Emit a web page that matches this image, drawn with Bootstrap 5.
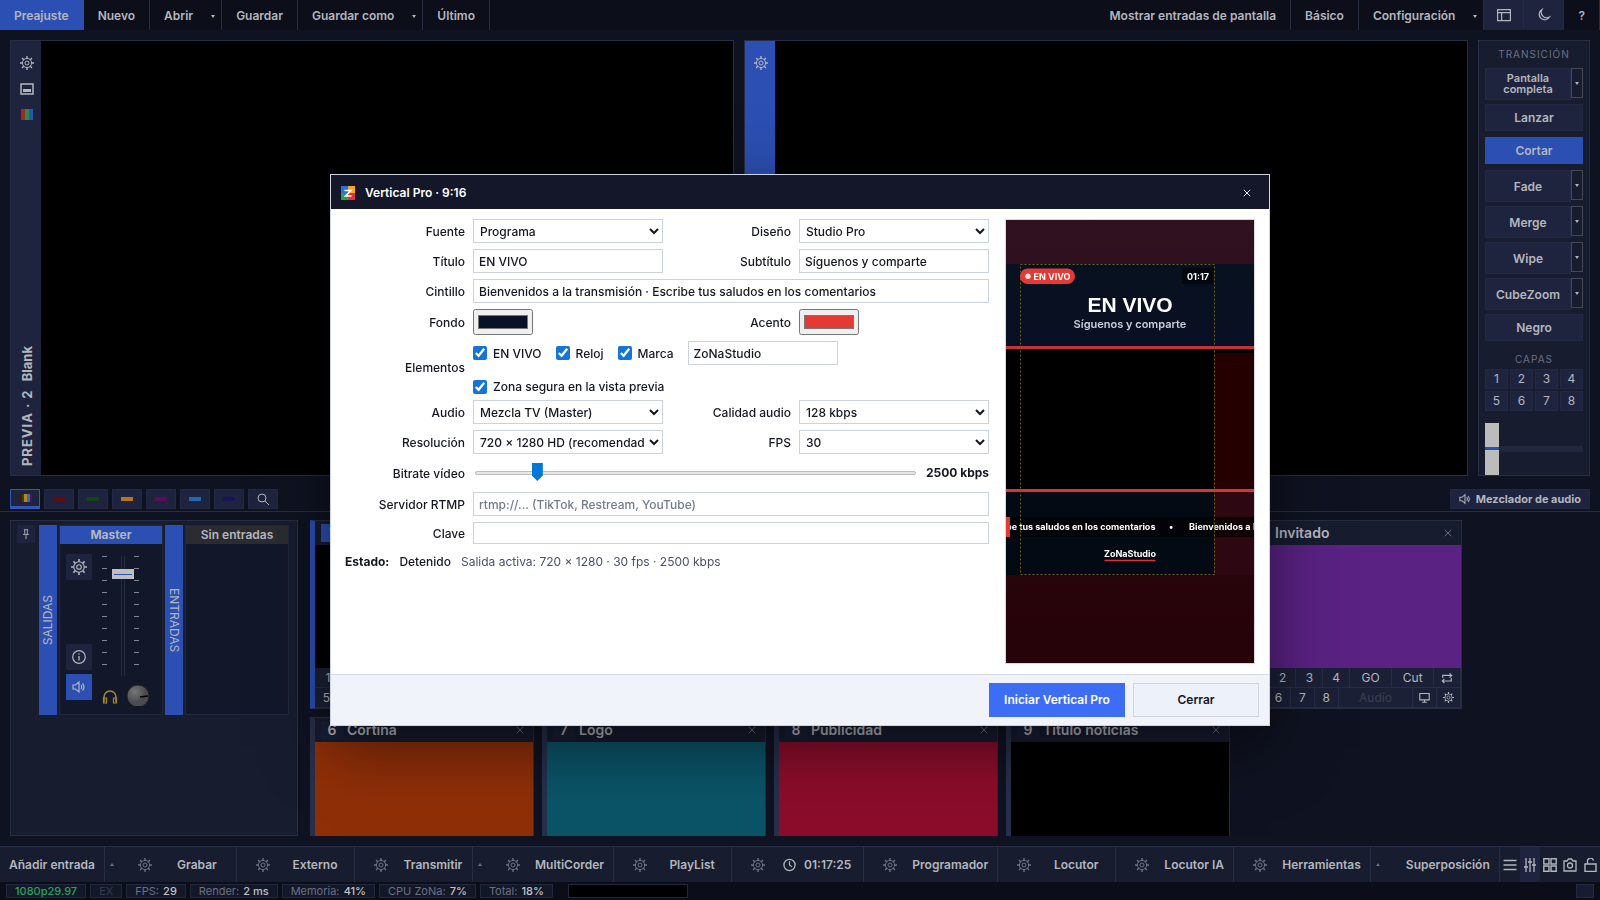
<!DOCTYPE html>
<html lang="es">
<head>
<meta charset="utf-8">
<meta name="viewport" content="width=device-width, initial-scale=1">
<title>ZoNaStudio</title>
<link href="https://cdn.jsdelivr.net/npm/bootstrap@5.3.0/dist/css/bootstrap.min.css" rel="stylesheet">
<style>
:root{--bar:#0c0e1a;--page:#0f1321;--panel:#171c2f;--key:#1e243d;--line:#272d42;--blue:#2b4fb2;--ink:#b4b6bd;--soft:#6b7083}
body{font-family:Inter,"Liberation Sans",sans-serif;font-size:12px;line-height:16px;background:var(--page);color:var(--ink);height:100vh;min-width:1280px;overflow:hidden}
button{font:inherit;color:inherit;background:none;border:0;padding:0}
svg{display:block;flex:none}
.ico{width:14px;height:14px;fill:none;stroke:currentColor}
.topbar{height:30px;background:var(--bar);font-weight:600}
.topbar button{padding:2px 14px 0;border-right:1px solid var(--line);height:30px;white-space:nowrap}
.topbar .active{background:var(--blue);border-color:var(--blue)}
.topbar .split{padding-right:6px;display:flex;align-items:center;gap:18px}
.topbar .sq{background:var(--key);width:40px;padding:0;display:grid;place-items:center;border-color:#242a42}
.caret,.caret-up{width:0;height:0;border:2px solid transparent;border-top:3px solid currentColor;border-bottom:0}
.caret-up{border-top:0;border-bottom:3px solid var(--soft)}
.stage{padding:10px 10px 0;gap:10px}
.monitor{flex:1;border:1px solid var(--line);background:#000}
.rail{width:30px;background:var(--key);padding:15px 0 9px 2px}
.rail.live{background:var(--blue)}
.vert{writing-mode:vertical-rl;transform:rotate(180deg)}
.rail .vert{font-size:13px;font-weight:700;letter-spacing:1px}
.rail .vert span{letter-spacing:0}
.trans{width:112px;height:436px;border:1px solid var(--line);background:var(--panel);padding:6px 6px 0;overflow:hidden}
.cap{font-size:10px;letter-spacing:1px;color:var(--soft);text-align:center;line-height:14px}
.key{background:var(--key);border:1px solid #232942;font-weight:600;font-size:12px;text-align:center;display:block;width:100%;height:27px;margin-bottom:6px}
.key.on{background:var(--blue);border-color:var(--blue)}
.duo{display:flex;margin-bottom:4px;height:32px}
.duo .key{height:32px;margin:0;line-height:11px}
.duo .drop{width:12px;flex:none;height:30px;border:1px solid #444855;display:grid;place-items:center}
.layers{display:grid;grid-template-columns:repeat(4,1fr);gap:2px}
.layers button{background:var(--key);height:20px;border:1px solid #232942}
.fader{height:52px;margin-top:12px}
input[type=range]{appearance:none;-webkit-appearance:none;background:none;margin:0}
.tbar{width:98px;height:52px;display:block}
.tbar::-webkit-slider-runnable-track{height:52px;background:linear-gradient(#22273e,#22273e) center/100% 6px no-repeat}
.tbar::-webkit-slider-thumb{-webkit-appearance:none;width:14px;height:52px;background:linear-gradient(#bcbcbc 24px,var(--blue) 24px 27px,#bcbcbc 27px)}
.tabs{height:36px;padding:13px 10px 2px;border-bottom:1px solid var(--line);gap:4px}
.tabs button{width:30px;height:20px;background:var(--key);border:1px solid #232942;display:grid;place-items:center}
.tabs i{width:12px;height:4px}
.tabs .active{border:1px solid #3157b8;border-bottom-width:3px}
.tabs .mix{width:auto;display:flex;align-items:center;gap:5px;padding:0 8px;font-size:11px;font-weight:700}
.work{padding:8px 0 10px 10px;gap:12px;min-height:0}
.mixer{width:288px;flex:none;border:1px solid var(--line);background:var(--panel);padding:4px 8px 0 6px}
.strips{height:190px}
.pin,.sqb{background:var(--key);display:grid;place-items:center}
.pin{width:18px;height:18px;margin-right:4px}
.sqb{width:26px;height:26px}
.bus{width:18px;background:var(--blue);display:grid;place-items:center}
.chan{flex:1;margin-left:2px;border:1px solid #22283c;background:#13172a}
.chan h2{font-size:12px;font-weight:700;line-height:18px;background:var(--blue);margin:0;text-align:center}
.chan .none{background:#2a2c31;font-weight:600}
.grid5{display:grid;grid-template-columns:repeat(auto-fill,224px);gap:8px;align-content:start;overflow:hidden;flex:1}
.feed{height:189px;border:1px solid var(--line);border-left:5px solid #282f4a;background:var(--panel)}
.feed.on{border-left-color:var(--blue)}
.feed header{height:24px;font-size:14px;font-weight:600;gap:4px;padding:0 6px}
.feed header b{width:22px;height:18px;line-height:18px;background:#1a1f36;text-align:center;font-weight:600}
.feed.on header b{background:var(--blue)}
.feed header button{margin-left:auto;color:#73767e}
.pic{height:123px}
.ctl{display:flex;height:20px}
.ctl button{flex:1;background:#1b2037;border:0 solid var(--line);border-width:0 1px 1px 0;display:grid;place-items:center}
.ctl .w{flex:1.6}.ctl .a{flex:3.2;color:#3b4054}
.dock{height:36px;border-top:1px solid var(--line);background:var(--panel);font-weight:600;white-space:nowrap}
.dock>*{flex:none;border-right:1px solid var(--line);display:flex;align-items:center}
.dock .gear{width:39px;height:100%;display:flex;align-items:center;justify-content:center;padding-left:13px;color:#6f7382}
.dock .go{min-width:78px;padding:0 9px;display:flex;align-items:center;justify-content:center;gap:8px}
.dock .up{width:14px;border-right:0;justify-content:center}
.dock .tools{flex:1;border:0}
.dock .tools button{flex:1;height:35px;display:grid;place-items:center}
.dock .tools .on{background:#1e243d}
.stat{height:18px;background:#0b0d19;padding:2px 6px;gap:4px;font-size:11px;color:var(--soft)}
.stat span{border:1px solid #22283d;background:#131829;height:14px;line-height:13px;padding:0 8px;white-space:nowrap}
.stat b{font-weight:500;color:#c0c2c8;margin-left:1px}
.modal-dialog{max-width:940px}
.modal-content{border:1px solid #cfd4e2;border-radius:0;box-shadow:0 20px 60px rgba(0,0,0,.5);color:#14171f}
.modal-header{background:#131729;color:#fff;height:34px;padding:1px 15px 0 10px;border:0;border-radius:0;gap:10px;justify-content:flex-start}
.modal-title{font-size:12px;font-weight:600;line-height:16px}
.modal-body{padding:10px 14px;gap:16px}
.modal-footer{background:#f0f3f9;border-top:1px solid #d5dce3;border-radius:0;padding:8px 10px;gap:8px;height:51px}
.modal-footer .btn{margin:0;height:34px;font-size:12px;font-weight:600;border-radius:0;padding:0}
.btn-go{width:136px;background:#3c6df4;color:#fff}.btn-shut{width:126px;border:1px solid #cfd5e0;background:#edf1fa;color:#14171f}
.form{flex:1;display:grid;grid-template-columns:120px 1fr 120px 1fr;gap:6px 8px;align-content:start;align-items:center;font-weight:500}
.form>label,.form>.lab{text-align:right;padding-top:1px}
.all{grid-column:2/-1}
.field{height:24px;width:100%;min-width:0;border:1px solid #ccd2dc;border-radius:0;background:#fff;color:#14171f;padding:0 5px;font-size:12px;font-weight:500;line-height:16px;outline:0}
select.field{padding:0 2px;font-weight:500}
.field::placeholder{color:#737b8c}
input[type=color]{width:60px;height:26px;display:block;padding:1px 2px}
input[type=color]::-webkit-color-swatch-wrapper{padding:4px 2px}
.checks{display:flex;flex-wrap:wrap;gap:14px;align-items:center}
.checks label{display:flex;align-items:center;gap:6px;line-height:15px}
.checks input[type=checkbox]{width:14px;height:14px;margin:0;accent-color:#1673d8}
.checks .field{width:150px}
.form .rate{flex:1;height:26px;margin:0 2px}
.rate::-webkit-slider-runnable-track{height:4px;border:1px solid #bdbdbd;background:#e6e6e6;border-radius:2px}
.rate::-webkit-slider-thumb{-webkit-appearance:none;width:11px;height:18px;margin-top:-9px;background:#0078d7;clip-path:polygon(0 0,100% 0,100% 70%,50% 100%,0 70%)}
.state{grid-column:1/-1;margin-top:4px}
.note{color:#475069;font-weight:400}
.shot{width:250px;flex:none;border:1px solid #d5d8e0}
.shot svg{width:100%;height:auto}
</style>
</head>
<body class="d-flex flex-column">
<svg width="0" height="0" class="position-absolute">
<symbol id="gear" viewBox="0 0 14 14"><circle cx="7" cy="7" r="4.6"/><circle cx="7" cy="7" r="2"/><path d="M7 0v2.4M7 11.6V14M0 7h2.4M11.6 7H14M2.1 2.1l1.6 1.6M10.3 10.3l1.6 1.6M2.1 11.9l1.6-1.6M10.3 3.7l1.6-1.6" stroke-width="1.4"/></symbol>
<symbol id="x" viewBox="0 0 14 14"><path d="M3.800 3.800l6.400 6.400M10.200 3.800l-6.400 6.400" stroke-width=".9"/></symbol>
<symbol id="spk" viewBox="0 0 14 14"><path d="M1 5h2.500L7 2v10L3.500 9H1zM9 5q1.500 2 0 4M10.500 3.500q3 3.500 0 7" stroke-width="1.200"/></symbol>
</svg>

<nav class="topbar d-flex" aria-label="Principal">
<button class="active">Preajuste</button><button>Nuevo</button><button class="split">Abrir<span class="caret"></span></button><button>Guardar</button><button class="split">Guardar como<span class="caret"></span></button><button>Último</button>
<button class="ms-auto">Mostrar entradas de pantalla</button><button>Básico</button><button class="split">Configuración<span class="caret"></span></button>
<button class="sq" aria-label="Diseño"><svg class="ico" viewBox="0 0 14 14"><path d="M.6 1.600h12.800v11H.6zM.6 4.600h12.800M4.600 4.600v8" stroke-width="1.200"/></svg></button>
<button class="sq" aria-label="Tema"><svg class="ico" viewBox="0 0 14 14"><path d="M5 1.500A5.500 5.500 0 1 0 12.500 9 5.500 5.500 0 0 1 5 1.500z" stroke-width="1.200"/></svg></button>
<button>?</button>
</nav>

<section class="stage d-flex">
<div class="monitor d-flex"><div class="rail d-flex flex-column align-items-center">
<svg class="ico"><use href="#gear"/></svg>
<svg class="ico" style="margin-top:12px" viewBox="0 0 14 14"><path d="M1 2h12v10H1z" stroke-width="1.500"/><path d="M3 8.500h8" stroke-width="3"/></svg>
<svg width="12" height="11" style="margin-top:13px"><path fill="#992b2b" d="M0 0h4v11H0z"/><path fill="#2c8a44" d="M4 0h4v11H4z"/><path fill="#2857a8" d="M8 0h4v11H8z"/></svg>
<div class="vert mt-auto">PREVIA · 2 &nbsp;<span>Blank</span></div></div></div>
<div class="monitor d-flex"><div class="rail live d-flex flex-column align-items-center"><svg class="ico"><use href="#gear"/></svg></div></div>
<aside class="trans">
<div class="cap" style="margin-bottom:7px">TRANSICIÓN</div>
<div class="duo"><button class="key" style="font-size:11px">Pantalla completa</button><button class="drop" aria-label="Opciones"><span class="caret"></span></button></div>
<button class="key">Lanzar</button><button class="key on">Cortar</button>
<div class="duo"><button class="key">Fade</button><button class="drop" aria-label="Opciones"><span class="caret"></span></button></div>
<div class="duo"><button class="key">Merge</button><button class="drop" aria-label="Opciones"><span class="caret"></span></button></div>
<div class="duo"><button class="key">Wipe</button><button class="drop" aria-label="Opciones"><span class="caret"></span></button></div>
<div class="duo"><button class="key">CubeZoom</button><button class="drop" aria-label="Opciones"><span class="caret"></span></button></div>
<button class="key">Negro</button>
<div class="cap" style="margin:11px 0 3px">CAPAS</div>
<div class="layers"><button>1</button><button>2</button><button>3</button><button>4</button><button>5</button><button>6</button><button>7</button><button>8</button></div>
<div class="fader"><input class="tbar" type="range" value="0" aria-label="Transición manual"></div>
</aside>
</section>

<section class="tabs d-flex">
<button class="active" aria-label="Todas"><svg width="13" height="8"><path fill="#4a1414" d="M0 0h3v8H0z"/><path fill="#145214" d="M3 0h2v8H3z"/><path fill="#c08020" d="M5 0h3v8H5z"/><path fill="#2e70b8" d="M8 0h3v8H8z"/><path fill="#551155" d="M11 0h2v8h-2z"/></svg></button>
<button aria-label="Rojo"><i style="background:#620b10"></i></button><button aria-label="Verde"><i style="background:#10451a"></i></button><button aria-label="Naranja"><i style="background:#b8741c"></i></button><button aria-label="Magenta"><i style="background:#5c0c5e"></i></button><button aria-label="Azul"><i style="background:#2268b4"></i></button><button aria-label="Índigo"><i style="background:#17155a"></i></button>
<button aria-label="Buscar"><svg class="ico" viewBox="0 0 14 14"><circle cx="6" cy="6" r="4"/><path d="M9 9l4 4"/></svg></button>
<button class="mix ms-auto"><svg class="ico" style="width:12px"><use href="#spk"/></svg>Mezclador de audio</button>
</section>

<section class="work d-flex flex-grow-1">
<div class="mixer"><div class="strips d-flex">
<button class="pin" aria-label="Fijar"><svg class="ico" style="width:12px;height:12px" viewBox="0 0 14 14"><path d="M4.500 2h5M5.500 2v5M8.500 2v5M3.500 7.500h7M7 7.500V13"/></svg></button>
<div class="bus"><span class="vert">SALIDAS</span></div>
<div class="chan d-flex flex-column"><h2>Master</h2>
<div class="d-flex flex-grow-1"><div class="d-flex flex-column ps-2" style="width:34px;padding-top:10px;margin-left:-2px">
<button class="sqb" aria-label="Ajustes"><svg class="ico" style="width:16px;height:16px"><use href="#gear"/></svg></button>
<button class="sqb" style="margin-top:64px" aria-label="Información"><svg class="ico" viewBox="0 0 14 14"><circle cx="7" cy="7" r="6.300" stroke-width="1.200"/><path d="M7 6v4.500M7 3.500v1.300" stroke-width="1.300"/></svg></button>
<button class="sqb" style="background:var(--blue);margin-top:4px" aria-label="Sonido"><svg class="ico"><use href="#spk"/></svg></button></div>
<svg width="68" height="162" viewBox="0 0 68 162"><path d="M10 12.500h5M10 24.500h5M10 36.500h5M10 48.500h5M10 60.500h5M10 72.500h5M10 84.500h5M10 96.500h5M10 108.500h5M10 120.500h5M42 12.500h5M42 24.500h5M42 36.500h5M42 48.500h5M42 60.500h5M42 72.500h5M42 84.500h5M42 96.500h5M42 108.500h5M42 120.500h5" stroke="#83868e"/><path d="M29.500 12v120M32.500 12v120" stroke="#262b3e"/><path fill="#bfbfbf" d="M20 25h22v10H20z"/><path d="M22 30.500h18" stroke="#2b4fb2"/>
<path d="M12 158v-5a6 6 0 0 1 12 0v5" fill="none" stroke="#a58a2c" stroke-width="1.500"/><path d="M11.500 154h3v5h-3zM21.500 154h3v5h-3z" fill="none" stroke="#a58a2c" stroke-width="1.200"/><defs><radialGradient id="kn" cx=".35" cy=".3"><stop stop-color="#777"/><stop offset="1" stop-color="#4a4b4e"/></radialGradient></defs><circle cx="46" cy="152" r="11" fill="url(#kn)" stroke="#222"/><path d="M48 153l8-1" stroke="#000" stroke-width="1.500"/></svg>
</div></div>
<div class="bus" style="margin-left:2px"><span class="vert" style="transform:none">ENTRADAS</span></div>
<div class="chan"><h2 class="none">Sin entradas</h2></div>
</div></div>

<div class="grid5">
<article class="feed on"><header class="d-flex align-items-center"><b>1</b></header><div class="pic" style="background:#000"></div><div class="ctl"><button>1</button><button>2</button><button>3</button><button>4</button><button class="w">GO</button><button class="w">Cut</button><button></button></div><div class="ctl"><button>5</button><button>6</button><button>7</button><button>8</button><button class="a">Audio</button><button></button><button></button></div></article>
<article class="feed"></article><article class="feed"></article><article class="feed"></article>
<article class="feed"><header class="d-flex align-items-center"><b>5</b><span>Invitado</span><button aria-label="Cerrar"><svg class="ico"><use href="#x"/></svg></button></header><div class="pic" style="background:#592283"></div>
<div class="ctl"><button>1</button><button>2</button><button>3</button><button>4</button><button class="w">GO</button><button class="w">Cut</button><button aria-label="Bucle"><svg class="ico" style="width:12px;height:12px" viewBox="0 0 14 14"><path d="M2 7V4h10M10 1.500L12.500 4 10 6.500M12 7v3.500H2M4 8l-2.500 2.500L4 13" stroke-width="1.300"/></svg></button></div>
<div class="ctl"><button>5</button><button>6</button><button>7</button><button>8</button><button class="a">Audio</button><button aria-label="Pantalla"><svg class="ico" style="width:11px;height:11px" viewBox="0 0 14 14"><path d="M1 2h12v8H1zM7 10v3M4 13h6" stroke-width="1.400"/></svg></button><button aria-label="Ajustes"><svg class="ico" style="width:11px;height:11px"><use href="#gear"/></svg></button></div></article>
<article class="feed"><header class="d-flex align-items-center"><b>6</b><span>Cortina</span><button aria-label="Cerrar"><svg class="ico"><use href="#x"/></svg></button></header><div class="pic" style="background:#8f2f08"></div></article>
<article class="feed"><header class="d-flex align-items-center"><b>7</b><span>Logo</span><button aria-label="Cerrar"><svg class="ico"><use href="#x"/></svg></button></header><div class="pic" style="background:#0b5468"></div></article>
<article class="feed"><header class="d-flex align-items-center"><b>8</b><span>Publicidad</span><button aria-label="Cerrar"><svg class="ico"><use href="#x"/></svg></button></header><div class="pic" style="background:#8b0d2b"></div></article>
<article class="feed"><header class="d-flex align-items-center"><b>9</b><span>Título noticias</span><button aria-label="Cerrar"><svg class="ico"><use href="#x"/></svg></button></header><div class="pic" style="background:#000"></div></article>
</div>
</section>

<footer class="dock d-flex">
<button style="padding:0 9px">Añadir entrada</button><button class="up" aria-label="Más"><span class="caret-up"></span></button>
<div><button class="gear" aria-label="Ajustes"><svg class="ico"><use href="#gear"/></svg></button><button class="go">Grabar</button></div>
<div><button class="gear" aria-label="Ajustes"><svg class="ico"><use href="#gear"/></svg></button><button class="go">Externo</button></div>
<div><button class="gear" aria-label="Ajustes"><svg class="ico"><use href="#gear"/></svg></button><button class="go">Transmitir</button></div>
<button class="up" aria-label="Más"><span class="caret-up"></span></button>
<div><button class="gear" aria-label="Ajustes"><svg class="ico"><use href="#gear"/></svg></button><button class="go">MultiCorder</button></div>
<div><button class="gear" aria-label="Ajustes"><svg class="ico"><use href="#gear"/></svg></button><button class="go">PlayList</button></div>
<div><button class="gear" aria-label="Ajustes"><svg class="ico"><use href="#gear"/></svg></button><button class="go" style="padding:0 12px"><svg class="ico" style="width:13px" viewBox="0 0 14 14"><circle cx="7" cy="7" r="6" stroke-width="1.400"/><path d="M7 3v4l2.500 2" stroke-width="1.300"/></svg>01:17:25</button></div>
<div><button class="gear" aria-label="Ajustes"><svg class="ico"><use href="#gear"/></svg></button><button class="go">Programador</button></div>
<div><button class="gear" aria-label="Ajustes"><svg class="ico"><use href="#gear"/></svg></button><button class="go">Locutor</button></div>
<div><button class="gear" aria-label="Ajustes"><svg class="ico"><use href="#gear"/></svg></button><button class="go">Locutor IA</button></div>
<div><button class="gear" aria-label="Ajustes"><svg class="ico"><use href="#gear"/></svg></button><button class="go">Herramientas</button></div>
<button class="up" aria-label="Más"><span class="caret-up"></span></button>
<button style="padding:0 9px 0 21px">Superposición</button>
<div class="tools">
<button aria-label="Lista"><svg class="ico" viewBox="0 0 14 14"><path d="M.5 2.500h13M.5 7h13M.5 11.500h13" stroke-width="1.500"/></svg></button>
<button class="on" aria-label="Mezclador"><svg class="ico" viewBox="0 0 14 14"><path d="M3 0v14M7 0v14M11 0v14M1 9h4M5 4h4M9 7h4" stroke-width="1.300"/></svg></button>
<button aria-label="Cuadrícula"><svg class="ico" viewBox="0 0 14 14"><path d="M.8.8h5.200v5.200H.8zM8 .8h5.200v5.200H8zM.8 8h5.200v5.200H.8zM8 8h5.200v5.200H8z" stroke-width="1.400"/></svg></button>
<button aria-label="Captura"><svg class="ico" viewBox="0 0 14 14"><path d="M1 3h3l1.500-2h3L10 3h3v10H1z" stroke-width="1.300"/><circle cx="7" cy="7.500" r="2.500" stroke-width="1.300"/></svg></button>
<button aria-label="Bloqueo"><svg class="ico" viewBox="0 0 14 14"><path d="M2 6h11v7.500H2zM4.500 6V4a3 3 0 0 1 6-1.500" stroke-width="1.400"/></svg></button>
</div>
</footer>
<div class="stat d-flex"><span style="color:#27a35c;font-weight:500">1080p29.97</span><span style="color:#363b4c">EX</span><span>FPS: <b>29</b></span><span>Render: <b>2 ms</b></span><span>Memoria: <b>41%</b></span><span>CPU ZoNa: <b>7%</b></span><span>Total: <b>18%</b></span><span style="width:120px;background:#000;margin-left:11px"></span><span class="ms-auto" style="width:18px;background:#171c33;padding:0"></span></div>

<div class="modal d-block" tabindex="-1" role="dialog" aria-labelledby="dlg">
<div class="modal-dialog modal-dialog-centered"><div class="modal-content">
<div class="modal-header">
<svg width="14" height="14" viewBox="0 0 14 14"><path fill="#2b6fe0" d="M0 0h7v7H0z"/><path fill="#f5a623" d="M7 0h7v7H7z"/><path fill="#1fa552" d="M0 7h7v7H0z"/><path fill="#d9363e" d="M7 7h7v7H7z"/><path d="M3.500 4.500h6.500L4.500 10h6" fill="none" stroke="#fff" stroke-width="1.500"/></svg>
<h1 class="modal-title" id="dlg">Vertical Pro · 9:16</h1>
<button class="ms-auto" aria-label="Cerrar"><svg class="ico"><use href="#x"/></svg></button>
</div>
<div class="modal-body d-flex">
<form class="form">
<label for="f1">Fuente</label><select id="f1" class="field"><option>Programa</option></select>
<label for="f2">Diseño</label><select id="f2" class="field"><option>Studio Pro</option></select>
<label for="f3">Título</label><input id="f3" class="field" value="EN VIVO">
<label for="f4">Subtítulo</label><input id="f4" class="field" value="Síguenos y comparte">
<label for="f5">Cintillo</label><input id="f5" class="field all" value="Bienvenidos a la transmisión · Escribe tus saludos en los comentarios">
<label for="f6">Fondo</label><input id="f6" type="color" value="#081226">
<label for="f7">Acento</label><input id="f7" type="color" value="#e53935">
<span class="lab">Elementos</span><div class="checks all"><label><input type="checkbox" checked>EN VIVO</label><label><input type="checkbox" checked>Reloj</label><label><input type="checkbox" checked>Marca</label><input class="field" value="ZoNaStudio" aria-label="Marca"><div class="w-100 d-flex"><label><input type="checkbox" checked>Zona segura en la vista previa</label></div></div>
<label for="f8">Audio</label><select id="f8" class="field"><option>Mezcla TV (Master)</option></select>
<label for="f9">Calidad audio</label><select id="f9" class="field"><option>128 kbps</option></select>
<label for="f10">Resolución</label><select id="f10" class="field"><option>720 × 1280 HD (recomendado)</option></select>
<label for="f11">FPS</label><select id="f11" class="field"><option>30</option></select>
<label for="f12">Bitrate vídeo</label><div class="all d-flex align-items-center gap-2"><input id="f12" class="rate" type="range" min="1000" max="12500" value="2500"><b>2500 kbps</b></div>
<label for="f13">Servidor RTMP</label><input id="f13" class="field all" placeholder="rtmp://... (TikTok, Restream, YouTube)">
<label for="f14">Clave</label><input id="f14" class="field all" type="password" style="height:22px">
<div class="state d-flex"><b style="margin-right:10px">Estado:</b><span style="margin-right:10px">Detenido</span><span class="note">Salida activa: 720 × 1280 · 30 fps · 2500 kbps</span></div>
</form>
<div class="shot">
<svg viewBox="0 0 248 443" font-family="Inter, sans-serif" font-weight="700" fill="#fff">
<defs><linearGradient id="bg" x2="0" y2="1"><stop stop-color="#2f1120"/><stop offset=".25" stop-color="#2d0e1c"/><stop offset=".7" stop-color="#28040c"/><stop offset="1" stop-color="#260308"/></linearGradient><linearGradient id="tp" x2="0" y2="1"><stop stop-color="#08111f"/><stop offset="1" stop-color="#0a1024"/></linearGradient></defs>
<path fill="url(#bg)" d="M0 0h248v443H0z"/><path fill="url(#tp)" d="M0 44h248v84H0z"/>
<path d="M0 130h208v139H0z" fill="#000"/><path d="M208 130h40v3h-40z" fill="#000"/><path fill="#250000" d="M208 133h40v136h-40z"/>
<path fill="#040a14" d="M0 272h208v83H0z"/><path fill="#2d0813" d="M208 272h40v83h-40z"/>
<path fill="#c43436" d="M0 126h248v3H0z"/><path fill="#d93434" d="M0 269h248v3H0z"/>
<path fill="#000" fill-opacity=".65" d="M0 297h248v20H0z"/>
<text x="0" y="310" font-size="9">be tus saludos en los comentarios</text><text x="163" y="310" font-size="9">•</text><text x="183" y="310" font-size="9">Bienvenidos a</text><path fill="#e53935" d="M0 297h4v20H0z"/><path d="M247.500 303v7" stroke="#8a7a7e"/>
<text x="124" y="337" font-size="9" text-anchor="middle">ZoNaStudio</text><path d="M98.500 340.500h51" stroke="#d93434" stroke-width="1.500"/>
<path d="M14.500 44.500h194v310h-194z" fill="none" stroke="#6b6022" stroke-dasharray="2 2"/>
<rect x="14" y="48.500" width="55" height="15.500" rx="7.700" fill="#e53935"/><circle cx="22" cy="56.300" r="2.700" fill="#fbe6e6"/><text x="27.500" y="59.500" font-size="9">EN VIVO</text>
<rect x="176" y="48" width="31" height="16" rx="2" fill="#04070e"/><text x="181" y="59.500" font-size="9">01:17</text>
<text x="124" y="92" font-size="21" text-anchor="middle" font-family="Liberation Sans, sans-serif">EN VIVO</text>
<text x="124" y="108" font-size="11" text-anchor="middle" font-weight="600" fill="#ccd0da">Síguenos y comparte</text>
</svg></div>
</div>
<div class="modal-footer"><button class="btn btn-go">Iniciar Vertical Pro</button><button class="btn btn-shut">Cerrar</button></div>
</div></div></div>
<script src="https://cdn.jsdelivr.net/npm/bootstrap@5.3.0/dist/js/bootstrap.bundle.min.js"></script>
</body>
</html>
